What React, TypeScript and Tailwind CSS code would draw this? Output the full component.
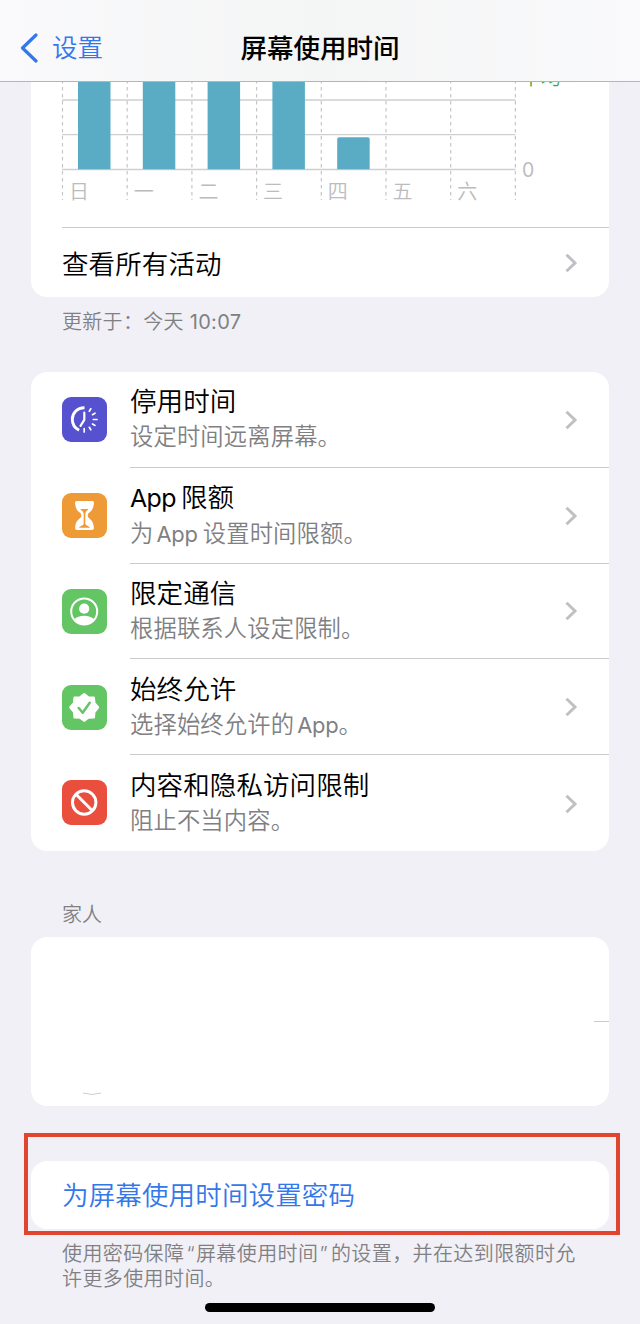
import React from 'react';

interface SettingItem {
  title: string;
  subtitle: string;
  color: string;
  icon: React.ReactNode;
}

const DAYS = ['日', '一', '二', '三', '四', '五', '六'];
const BARS = [120, 120, 120, 120, 32];

const COLUMN = 64.7;
const BASELINE = 87.5;

const DowntimeIcon = () => (
  <svg viewBox="0 0 45 45" className="size-[45px]" fill="none" stroke="white">
    <path d="M22.500 10.700C15 10.900 10.300 16 10.300 22.300c0 4.800 2.500 8.800 6.800 11" strokeWidth="2.900" />
    <path d="M22.300 15.500v7.300l-3.800 6" strokeWidth="2.200" strokeLinecap="round" strokeLinejoin="round" />
    <path
      d="M27.300 14.200l1.500-2.500M30.500 17.700l2.500-1.500M31.300 22.500h3.700M30.500 26.900l2.500 1.500M27.300 30.300l1.500 2.500M22.200 31.500v3.500"
      strokeWidth="1.700"
      strokeLinecap="round"
    />
  </svg>
);

const HourglassIcon = () => (
  <svg viewBox="0 0 45 45" className="size-[45px]">
    <path
      d="M14.800 8h15.400c1.300 0 1.900.9 1.700 2.200-.5 5.700-2 7.300-4.900 9.600-1.700 1.400-1.700 4 0 5.400 2.900 2.300 4.400 3.900 4.900 9.600.1 1.300-.4 2.200-1.700 2.200H14.800c-1.300 0-1.800-.9-1.700-2.200.5-5.700 2-7.300 4.900-9.600 1.700-1.400 1.700-4 0-5.400-2.900-2.300-4.400-3.900-4.900-9.600C13 8.900 13.500 8 14.800 8Z"
      fill="white"
    />
    <path d="M18.300 16h8.200c-.7 1.600-3.200 2.300-3.200 4.800v9.700c0 2.200 3.400 2 4.700 4.300H17c1.300-2.300 4.700-2.100 4.700-4.300v-9.700c0-2.500-2.700-3.200-3.400-4.800Z" fill="#ee9a37" />
  </svg>
);

const ContactIcon = () => (
  <svg viewBox="0 0 45 45" className="size-[45px]">
    <circle cx="22.200" cy="22.500" r="13" fill="none" stroke="white" strokeWidth="2" />
    <circle cx="22.200" cy="19.700" r="5.100" fill="white" />
    <path d="M12.200 30.300C14.500 28 18 26.800 22.200 26.800s7.700 1.200 10 3.500C30 33.800 26.500 35.500 22.200 35.500s-7.800-1.700-10-5.200Z" fill="white" />
  </svg>
);

const VerifiedIcon = () => (
  <svg viewBox="0 0 45 45" className="size-[45px]" strokeLinejoin="round" strokeLinecap="round">
    <path
      d="M22.200 9.300l4 3.200 5.500.2.500 5.300 3.700 4.400-3.700 4.400-.5 5.500-5.500.1-4 3.200-4-3.200-5.500-.1-.5-5.500-3.700-4.400 3.700-4.400.5-5.300 5.500-.2Z"
      fill="white"
      stroke="white"
      strokeWidth="2.600"
    />
    <path d="M16.700 23l4 4.700 7-10" fill="none" stroke="#63c563" strokeWidth="2.500" />
  </svg>
);

const BlockedIcon = () => (
  <svg viewBox="0 0 45 45" className="size-[45px]" fill="none" stroke="white" strokeWidth="3">
    <circle cx="22.200" cy="22.500" r="11.700" />
    <path d="M14 14.300l16.400 16.400" />
  </svg>
);

const ITEMS: SettingItem[] = [
  { title: '停用时间', subtitle: '设定时间远离屏幕。', color: 'bg-[#5651cf]', icon: <DowntimeIcon /> },
  { title: 'App限额', subtitle: '为App设置时间限额。', color: 'bg-[#ee9a37]', icon: <HourglassIcon /> },
  { title: '限定通信', subtitle: '根据联系人设定限制。', color: 'bg-[#63c563]', icon: <ContactIcon /> },
  { title: '始终允许', subtitle: '选择始终允许的App。', color: 'bg-[#63c563]', icon: <VerifiedIcon /> },
  { title: '内容和隐私访问限制', subtitle: '阻止不当内容。', color: 'bg-[#ea4e3d]', icon: <BlockedIcon /> },
];

const Chevron = () => (
  <svg viewBox="0 0 14 22" className="h-[22px] w-[14px] shrink-0" fill="none" stroke="#c0c0c4" strokeWidth="3">
    <path d="M2.500 2.700l8.500 8.300-8.500 8.300" />
  </svg>
);

// El texto latino va un poco más compacto que los caracteres chinos
const MixedText: React.FC<{ text: string }> = ({ text }) => (
  <>
    {text.split(/(App)/).filter(Boolean).map((part, i, parts) =>
      part === 'App' ? (
        <span
          key={i}
          className={`text-[0.940em] font-normal ${i > 0 ? 'ml-[3px] tracking-[-0.200px]' : 'tracking-[-0.600px]'} ${parts[i + 1] === '。' ? '' : 'mr-[5px]'}`}
        >
          {part}
        </span>
      ) : (
        <React.Fragment key={i}>{part}</React.Fragment>
      )
    )}
  </>
);

const UsageChart = () => (
  <svg viewBox="0 0 578 145" className="block h-[145px] w-[578px]">
    <g stroke="#cfcfd1" strokeWidth="1.300">
      {[18, 52.7, BASELINE].map((y) => (
        <line key={y} x1="31" x2="484.500" y1={y} y2={y} />
      ))}
    </g>
    <g stroke="#c6c6c8" strokeWidth="1.200" strokeDasharray="3.500 3.500">
      {[0, 1, 2, 3, 4, 5, 6, 7].map((i) => (
        <line key={i} x1={31.5 + i * COLUMN} x2={31.5 + i * COLUMN} y1="-2" y2="118" />
      ))}
    </g>
    {BARS.map((h, i) => (
      <path
        key={i}
        fill="#5aacc5"
        d={`M${47 + i * 64.8} ${BASELINE - 0.3}v${-h + 2}q0-2 2-2h28.500q2 0 2 2v${h - 2}Z`}
      />
    ))}
    <g fill="#bcbcbe" fontSize="20">
      {DAYS.map((day, i) => (
        <text key={day} x={38 + i * COLUMN} y="116.500">{day}</text>
      ))}
      <text x="491" y="94.500" fontSize="19.500" className="font-['Inter','Liberation_Sans',sans-serif] font-normal">0</text>
    </g>
    <text x="490" y="2.500" fontSize="20" fill="#3fa648">平均</text>
  </svg>
);

const SettingRow: React.FC<{ item: SettingItem; last: boolean }> = ({ item, last }) => (
  <div className="flex h-[95.800px] pl-[31px]">
    <div className={`mt-[25.300px] size-[45px] shrink-0 overflow-hidden rounded-[9px] ${item.color}`}>{item.icon}</div>
    <div className={`ml-[23px] flex flex-1 items-center justify-between pt-[1px] pr-[31px] ${last ? '' : 'border-b border-[#cbcbcd]'}`}>
      <div className="whitespace-nowrap">
        <div className="text-[26.500px] leading-[35px] tracking-[0.100px] text-black"><MixedText text={item.title} /></div>
        <div className="text-[23.300px] leading-[36px] tracking-[0.150px] text-[#808083]"><MixedText text={item.subtitle} /></div>
      </div>
      <Chevron />
    </div>
  </div>
);

export default function App() {
  return (
    <div className="relative h-[1324px] w-[640px] overflow-hidden bg-[#f1f0f6] font-['Inter','Noto_Sans_CJK_SC',sans-serif] font-[350]">
      <header className="grid h-[82px] grid-cols-[1fr_auto_1fr] items-center border-b border-[#b4b5b8] bg-linear-to-r from-[#fafafc] via-[#f4f5f5] to-[#fafafc] pt-[14px]">
        <div className="flex items-center pl-[20px] text-[#3477ea]">
          <svg viewBox="0 0 20 30" className="h-[30px] w-[20px]" fill="none" stroke="currentColor" strokeWidth="3.200" strokeLinecap="round" strokeLinejoin="round">
            <path d="M16 2L2.500 15 16 28" />
          </svg>
          <span className="ml-[12px] text-[25.500px] leading-[36px]">设置</span>
        </div>
        <h1 className="text-[26.500px] leading-[36px] font-medium text-black">屏幕使用时间</h1>
      </header>

      <main className="px-[31px]">
        <section className="h-[215px] rounded-b-[16px] bg-white">
          <UsageChart />
          <div className="ml-[31px] flex h-[70px] items-center justify-between border-t border-[#cbcbcd] pr-[31px]">
            <span className="pt-[2px] text-[26.500px] leading-[36px] tracking-[0.100px] text-black">查看所有活动</span>
            <Chevron />
          </div>
        </section>
        <p className="mt-[11px] pl-[31px] text-[20px] leading-[28px] tracking-[0.300px] text-[#808084]">
          更新于：今天 <span className="font-normal">10:07</span>
        </p>

        <section className="mt-[36px] rounded-[16px] bg-white">
          {ITEMS.map((item, i) => (
            <SettingRow key={item.title} item={item} last={i === ITEMS.length - 1} />
          ))}
        </section>

        <h2 className="mt-[50px] pl-[31px] text-[20px] leading-[28px] tracking-[0.100px] text-[#808084]">家人</h2>
        <section className="relative mt-[8px] h-[169px] rounded-[16px] bg-white">
          <div className="absolute top-[84px] right-0 h-px w-[15px] bg-[#cbcbcd]" />
          <svg viewBox="0 0 20 4" className="absolute top-[155px] left-[51px] h-[4px] w-[20px]" fill="none" stroke="#cfcfd1">
            <path d="M1 1q9 3 18 0" />
          </svg>
        </section>

        <section className="mt-[55px] flex h-[68px] items-center rounded-[16px] bg-white pt-[1px] pl-[31px]">
          <button className="text-[26.500px] leading-[36px] tracking-[0.150px] text-[#3477ea]">为屏幕使用时间设置密码</button>
        </section>
        <div className="mt-[13px] pl-[31px] text-[20px] leading-[25px] tracking-[0.400px] whitespace-nowrap text-[#808084]">
          <p>
            使用密码保障<span className="mr-[1px] ml-[2px]">“</span>屏幕使用时间<span className="mr-[3px] ml-[1px]">”</span>的设置，并在达到限额时允
          </p>
          <p>许更多使用时间。</p>
        </div>
      </main>

      {/* Marco de resaltado sobre la opción de código */}
      <div className="absolute top-[1133px] left-[24px] h-[102px] w-[596px] border-4 border-[#e2452f]" />
      <div className="absolute top-[1303px] left-[205px] h-[9px] w-[230px] rounded-full bg-black" />
    </div>
  );
}
